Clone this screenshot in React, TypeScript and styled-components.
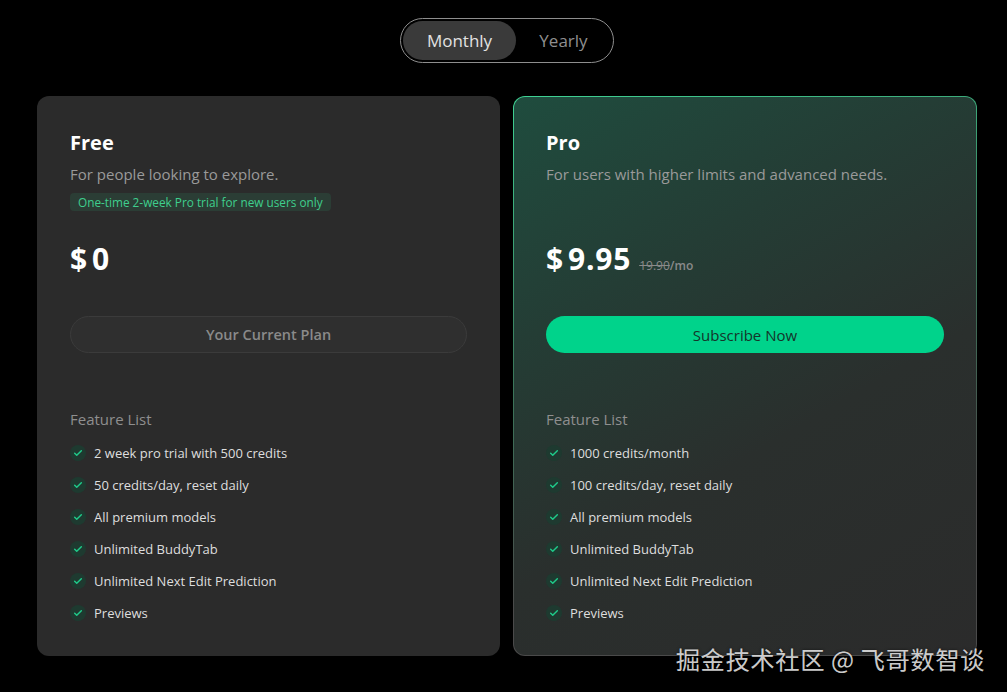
import React, { useState } from "react";
import styled, { createGlobalStyle } from "styled-components";

const Global = createGlobalStyle`
  html, body { margin: 0; padding: 0; background: #000; }
  body { font-family: "Open Sans", "Noto Sans", sans-serif; color: #fff; }
  * { box-sizing: border-box; }
`;

const Page = styled.div`
  position: relative;
  width: 1007px;
  height: 692px;
  overflow: hidden;
  background: #000;
  display: flex;
  flex-direction: column;
  align-items: center;
  padding-top: 18px;
  padding-left: 7px;
`;

const Toggle = styled.div`
  display: flex;
  height: 45px;
  padding: 2px;
  border: 1px solid #8e8e8e;
  border-radius: 999px;
`;

const ToggleBtn = styled.button<{ $active?: boolean; $w: number }>`
  width: ${(p) => p.$w}px;
  height: 39px;
  border: none;
  border-radius: 999px;
  background: ${(p) => (p.$active ? "#3a3a3a" : "transparent")};
  color: ${(p) => (p.$active ? "#e2e2e2" : "#8f8f8f")};
  font-family: inherit;
  font-size: 17px;
  cursor: pointer;
  padding: 0;
`;

const Cards = styled.div`
  display: grid;
  grid-template-columns: 463px 464px;
  gap: 13px;
  margin-top: 33px;
`;

const Card = styled.div<{ $pro?: boolean }>`
  border-radius: 12px;
  padding: 34px 32px 32px 32px;
  display: flex;
  flex-direction: column;
  border: 1px solid transparent;
  & > * {
    flex-shrink: 0;
  }
  background: ${(p) =>
    p.$pro
      ? "linear-gradient(150deg, #1f4c3e 0%, #243d35 30%, #2a2f2d 60%, #2b2b2b 100%) padding-box, linear-gradient(165deg, #3fd394 0%, #3a7a5c 40%, #4a4a4a 75%, #4a4a4a 100%) border-box"
      : "#2b2b2b"};
`;

const Title = styled.div`
  font-size: 20px;
  line-height: 24px;
  font-weight: 700;
  color: #fff;
`;

const Desc = styled.div`
  margin-top: 9px;
  font-size: 15px;
  line-height: 20px;
  color: #9a9a9a;
`;

const BadgeSlot = styled.div`
  margin-top: 9px;
  height: 18px;
  display: flex;
`;

const Badge = styled.span`
  display: inline-flex;
  align-items: center;
  height: 18px;
  padding: 0 8px;
  border-radius: 4px;
  background: #2b3d35;
  color: #3fcf8e;
  font-size: 11.8px;
`;

const PriceRow = styled.div`
  margin-top: 30px;
  height: 36px;
  display: flex;
  align-items: baseline;
`;

const Price = styled.span`
  font-size: 30px;
  line-height: 36px;
  font-weight: 700;
  color: #fff;
  letter-spacing: 0.8px;
`;

const Dollar = styled.span`
  margin-right: 4px;
`;

const OldPrice = styled.span`
  margin-left: 8px;
  font-size: 12px;
  color: #8a8a8a;
  font-weight: 600;
`;

const Strike = styled.span`
  text-decoration: line-through;
  font-weight: 400;
`;

const Button = styled.button<{ $primary?: boolean }>`
  margin-top: 39px;
  width: 100%;
  height: 37px;
  border-radius: 999px;
  font-family: inherit;
  cursor: pointer;
  ${(p) =>
    p.$primary
      ? `background: #00d38b; border: none; color: #15352a; font-weight: 500; font-size: 15px;`
      : `background: #2f2f2f; border: 1px solid #3b3b3b; color: #8a8a8a; font-weight: 600; font-size: 14.5px;`}
`;

const FeatureLabel = styled.div`
  margin-top: 56px;
  font-size: 15px;
  line-height: 20px;
  color: #8f8f8f;
`;

const List = styled.ul`
  list-style: none;
  margin: 14px 0 0 0;
  padding: 0;
  display: flex;
  flex-direction: column;
  gap: 12px;
`;

const Item = styled.li`
  display: flex;
  align-items: center;
  height: 20px;
  font-size: 13px;
  color: #dedede;
`;

const CheckDot = styled.span`
  width: 16px;
  height: 16px;
  border-radius: 50%;
  background: #1e3a30;
  display: inline-flex;
  align-items: center;
  justify-content: center;
  margin-right: 8px;
  flex-shrink: 0;
`;

const Watermark = styled.div`
  position: absolute;
  right: 22px;
  bottom: 17px;
  font-family: "Noto Sans CJK SC", sans-serif;
  font-size: 24.4px;
  line-height: 32px;
  color: rgba(230, 230, 230, 0.9);
  text-shadow: 0 0 3px rgba(0, 0, 0, 0.6);
  letter-spacing: 0.5px;
`;

const Check = () => (
  <CheckDot>
    <svg width="10" height="10" viewBox="0 0 24 24" fill="none" stroke="#1fcb8a" strokeWidth="3.5" strokeLinecap="round" strokeLinejoin="round">
      <path d="M4 12.5l5 5L20 6.5" />
    </svg>
  </CheckDot>
);

const freeFeatures = [
  "2 week pro trial with 500 credits",
  "50 credits/day, reset daily",
  "All premium models",
  "Unlimited BuddyTab",
  "Unlimited Next Edit Prediction",
  "Previews",
];

const proFeatures = [
  "1000 credits/month",
  "100 credits/day, reset daily",
  "All premium models",
  "Unlimited BuddyTab",
  "Unlimited Next Edit Prediction",
  "Previews",
];

export default function App() {
  const [mode, setMode] = useState<"m" | "y">("m");
  return (
    <Page>
      <Global />
      <Toggle>
        <ToggleBtn $w={113} $active={mode === "m"} onClick={() => setMode("m")}>Monthly</ToggleBtn>
        <ToggleBtn $w={95} $active={mode === "y"} onClick={() => setMode("y")}>Yearly</ToggleBtn>
      </Toggle>
      <Cards>
        <Card>
          <Title>Free</Title>
          <Desc>For people looking to explore.</Desc>
          <BadgeSlot>
            <Badge>One-time 2-week Pro trial for new users only</Badge>
          </BadgeSlot>
          <PriceRow>
            <Price><Dollar>$</Dollar>0</Price>
          </PriceRow>
          <Button>Your Current Plan</Button>
          <FeatureLabel>Feature List</FeatureLabel>
          <List>
            {freeFeatures.map((f) => (
              <Item key={f}><Check />{f}</Item>
            ))}
          </List>
        </Card>
        <Card $pro>
          <Title>Pro</Title>
          <Desc>For users with higher limits and advanced needs.</Desc>
          <BadgeSlot />
          <PriceRow>
            <Price><Dollar>$</Dollar>9.95</Price>
            <OldPrice><Strike>19.90</Strike>/mo</OldPrice>
          </PriceRow>
          <Button $primary>Subscribe Now</Button>
          <FeatureLabel>Feature List</FeatureLabel>
          <List>
            {proFeatures.map((f) => (
              <Item key={f}><Check />{f}</Item>
            ))}
          </List>
        </Card>
      </Cards>
      <Watermark>掘金技术社区 @ 飞哥数智谈</Watermark>
    </Page>
  );
}
